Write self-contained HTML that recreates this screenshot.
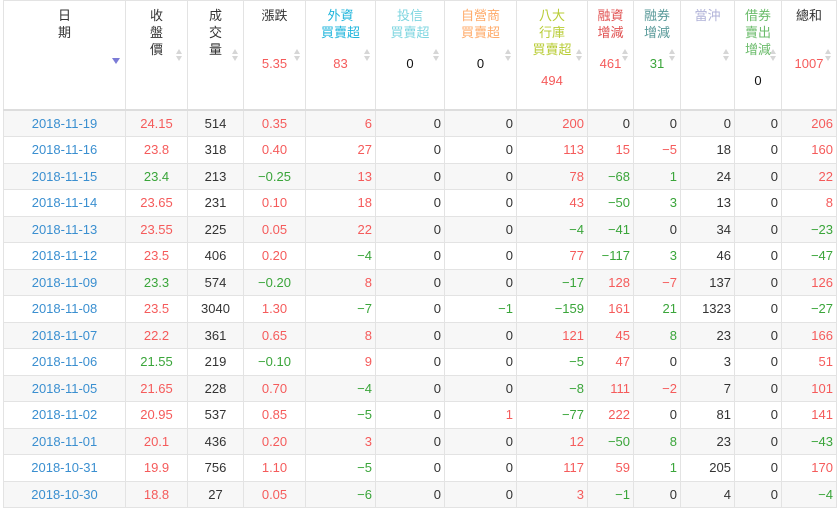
<!DOCTYPE html>
<html><head><meta charset="utf-8"><style>
body{margin:0;background:#fff;font-family:"Liberation Sans","Noto Sans CJK TC",sans-serif;}
table{position:absolute;left:3px;top:0;border-collapse:collapse;table-layout:fixed;width:833px;font-size:13px;color:#333;}
td,th{border:1px solid #e3e3e3;padding:0 3px;}
th{height:109px;box-sizing:border-box;vertical-align:top;font-weight:normal;font-size:13px;line-height:17px;padding-top:6px;position:relative;border-bottom:2px solid #ddd;text-align:center;}
th .n{position:relative;top:-3px;}
th .s{position:absolute;right:4px;top:48px;width:7px;height:14px;}
th .s:before{content:"";position:absolute;left:0;top:0;border:3.5px solid transparent;border-bottom:5px solid #d6d6d6;border-top:0;}
th .s:after{content:"";position:absolute;left:0;top:7px;border:3.5px solid transparent;border-top:5px solid #d6d6d6;border-bottom:0;}
th .d{position:absolute;right:5px;top:57px;border:4px solid transparent;border-top:6px solid #7b7bd6;border-bottom:0;}
td{height:25.5px;text-align:right;}
tr:nth-child(odd) td{background:#f7f7f7;}
td:nth-child(-n+4){text-align:center;}
td:first-child{color:#3a8fd0;}
.r{color:#f55b5b}.g{color:#3aa53a}
</style></head><body>
<table>
<colgroup><col style="width:122px"><col style="width:62px"><col style="width:56px"><col style="width:62px"><col style="width:70px"><col style="width:69px"><col style="width:72px"><col style="width:71px"><col style="width:46px"><col style="width:47px"><col style="width:54px"><col style="width:47px"><col style="width:55px"></colgroup>
<thead><tr>
<th>日<br>期<span class="d"></span></th>
<th>收<br>盤<br>價<span class="s"></span></th>
<th>成<br>交<br>量<span class="s"></span></th>
<th>漲跌<br><br><br><span class="r n">5.35</span><span class="s"></span></th>
<th><span style="color:#1fb5dc">外資<br>買賣超</span><br><br><span class="r n">83</span><span class="s"></span></th>
<th><span style="color:#7fd6e0">投信<br>買賣超</span><br><br><span class="n" style="color:#111">0</span><span class="s"></span></th>
<th><span style="color:#ffab6a">自營商<br>買賣超</span><br><br><span class="n" style="color:#111">0</span><span class="s"></span></th>
<th><span style="color:#b8cc35">八大<br>行庫<br>買賣超</span><br><br><span class="r n">494</span><span class="s"></span></th>
<th><span style="color:#e05050">融資<br>增減</span><br><br><span class="r n">461</span><span class="s"></span></th>
<th><span style="color:#5a9a9a">融券<br>增減</span><br><br><span class="g n">31</span><span class="s"></span></th>
<th><span style="color:#b0b2d8">當沖</span><span class="s"></span></th>
<th><span style="color:#6cbc6c">借券<br>賣出<br>增減</span><br><br><span class="n" style="color:#111">0</span><span class="s"></span></th>
<th>總和<br><br><br><span class="r n">1007</span><span class="s"></span></th>
</tr></thead>
<tbody>
<tr><td>2018-11-19</td><td class="r">24.15</td><td>514</td><td class="r">0.35</td><td class="r">6</td><td>0</td><td>0</td><td class="r">200</td><td>0</td><td>0</td><td>0</td><td>0</td><td class="r">206</td></tr>
<tr><td>2018-11-16</td><td class="r">23.8</td><td>318</td><td class="r">0.40</td><td class="r">27</td><td>0</td><td>0</td><td class="r">113</td><td class="r">15</td><td class="r">−5</td><td>18</td><td>0</td><td class="r">160</td></tr>
<tr><td>2018-11-15</td><td class="g">23.4</td><td>213</td><td class="g">−0.25</td><td class="r">13</td><td>0</td><td>0</td><td class="r">78</td><td class="g">−68</td><td class="g">1</td><td>24</td><td>0</td><td class="r">22</td></tr>
<tr><td>2018-11-14</td><td class="r">23.65</td><td>231</td><td class="r">0.10</td><td class="r">18</td><td>0</td><td>0</td><td class="r">43</td><td class="g">−50</td><td class="g">3</td><td>13</td><td>0</td><td class="r">8</td></tr>
<tr><td>2018-11-13</td><td class="r">23.55</td><td>225</td><td class="r">0.05</td><td class="r">22</td><td>0</td><td>0</td><td class="g">−4</td><td class="g">−41</td><td>0</td><td>34</td><td>0</td><td class="g">−23</td></tr>
<tr><td>2018-11-12</td><td class="r">23.5</td><td>406</td><td class="r">0.20</td><td class="g">−4</td><td>0</td><td>0</td><td class="r">77</td><td class="g">−117</td><td class="g">3</td><td>46</td><td>0</td><td class="g">−47</td></tr>
<tr><td>2018-11-09</td><td class="g">23.3</td><td>574</td><td class="g">−0.20</td><td class="r">8</td><td>0</td><td>0</td><td class="g">−17</td><td class="r">128</td><td class="r">−7</td><td>137</td><td>0</td><td class="r">126</td></tr>
<tr><td>2018-11-08</td><td class="r">23.5</td><td>3040</td><td class="r">1.30</td><td class="g">−7</td><td>0</td><td class="g">−1</td><td class="g">−159</td><td class="r">161</td><td class="g">21</td><td>1323</td><td>0</td><td class="g">−27</td></tr>
<tr><td>2018-11-07</td><td class="r">22.2</td><td>361</td><td class="r">0.65</td><td class="r">8</td><td>0</td><td>0</td><td class="r">121</td><td class="r">45</td><td class="g">8</td><td>23</td><td>0</td><td class="r">166</td></tr>
<tr><td>2018-11-06</td><td class="g">21.55</td><td>219</td><td class="g">−0.10</td><td class="r">9</td><td>0</td><td>0</td><td class="g">−5</td><td class="r">47</td><td>0</td><td>3</td><td>0</td><td class="r">51</td></tr>
<tr><td>2018-11-05</td><td class="r">21.65</td><td>228</td><td class="r">0.70</td><td class="g">−4</td><td>0</td><td>0</td><td class="g">−8</td><td class="r">111</td><td class="r">−2</td><td>7</td><td>0</td><td class="r">101</td></tr>
<tr><td>2018-11-02</td><td class="r">20.95</td><td>537</td><td class="r">0.85</td><td class="g">−5</td><td>0</td><td class="r">1</td><td class="g">−77</td><td class="r">222</td><td>0</td><td>81</td><td>0</td><td class="r">141</td></tr>
<tr><td>2018-11-01</td><td class="r">20.1</td><td>436</td><td class="r">0.20</td><td class="r">3</td><td>0</td><td>0</td><td class="r">12</td><td class="g">−50</td><td class="g">8</td><td>23</td><td>0</td><td class="g">−43</td></tr>
<tr><td>2018-10-31</td><td class="r">19.9</td><td>756</td><td class="r">1.10</td><td class="g">−5</td><td>0</td><td>0</td><td class="r">117</td><td class="r">59</td><td class="g">1</td><td>205</td><td>0</td><td class="r">170</td></tr>
<tr><td>2018-10-30</td><td class="r">18.8</td><td>27</td><td class="r">0.05</td><td class="g">−6</td><td>0</td><td>0</td><td class="r">3</td><td class="g">−1</td><td>0</td><td>4</td><td>0</td><td class="g">−4</td></tr>
</tbody></table>
</body></html>
